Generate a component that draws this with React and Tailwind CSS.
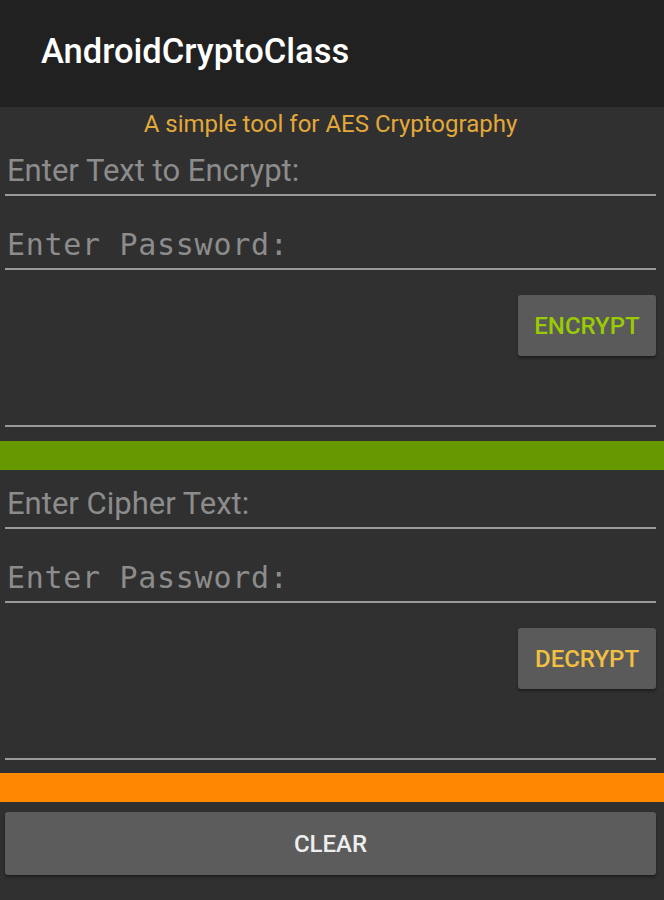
import React from 'react';

// simple field with hint text and android-style underline
function Field({ hint, mono, height }) {
  return (
    <div
      className={`flex items-end border-b-2 border-[#9a9a9a] pl-[2px] pb-[4px] ${height}`}
    >
      <span
        className={
          mono
            ? "font-['DejaVu_Sans_Mono',monospace] text-[30px] leading-[38px] tracking-[0.7px] text-[#8c8c8c]"
            : "font-['Roboto',sans-serif] text-[31px] leading-[38px] text-[#8c8c8c]"
        }
      >
        {hint}
      </span>
    </div>
  );
}

function Output({ label, color }) {
  return (
    <div className="flex h-[157px] flex-col items-end border-b-2 border-[#9a9a9a] pt-[25px]">
      <button
        className={`h-[61px] w-[138px] rounded-[3px] bg-[#5a5a5a] font-['Roboto',sans-serif] text-[24px] font-medium shadow-[0_2px_3px_rgba(0,0,0,0.4)] ${color}`}
      >
        {label}
      </button>
    </div>
  );
}

export default function App() {
  return (
    <div className="flex h-[900px] w-[664px] flex-col bg-[#303030] font-['Roboto',sans-serif]">
      <div className="flex h-[107px] shrink-0 items-center bg-[#212121] pb-[3px] pl-[41px]">
        <h1 className="text-[34.5px] font-medium text-white">AndroidCryptoClass</h1>
      </div>

      <div className="flex flex-col pl-[5px] pr-[8px]">
        <p className="h-[34px] text-center text-[24px] leading-[34px] text-[#e2a83a]">
          A simple tool for AES Cryptography
        </p>
        <Field hint="Enter Text to Encrypt:" height="h-[55px]" />
        <Field hint="Enter Password:" mono height="h-[74px]" />
        <Output label="ENCRYPT" color="text-[#99cc00]" />
      </div>

      <div className="mt-[14px] h-[29px] bg-[#669900]" />

      <div className="flex flex-col pl-[5px] pr-[8px]">
        <Field hint="Enter Cipher Text:" height="h-[59px]" />
        <Field hint="Enter Password:" mono height="h-[74px]" />
        <Output label="DECRYPT" color="text-[#f2c040]" />
      </div>

      <div className="mt-[13px] h-[29px] bg-[#ff8800]" />

      <div className="pl-[5px] pr-[8px] pt-[10px]">
        <button className="h-[63px] w-full rounded-[3px] bg-[#5c5c5c] text-[24px] font-medium text-[#eeeeee] shadow-[0_2px_3px_rgba(0,0,0,0.4)]">
          CLEAR
        </button>
      </div>
    </div>
  );
}
